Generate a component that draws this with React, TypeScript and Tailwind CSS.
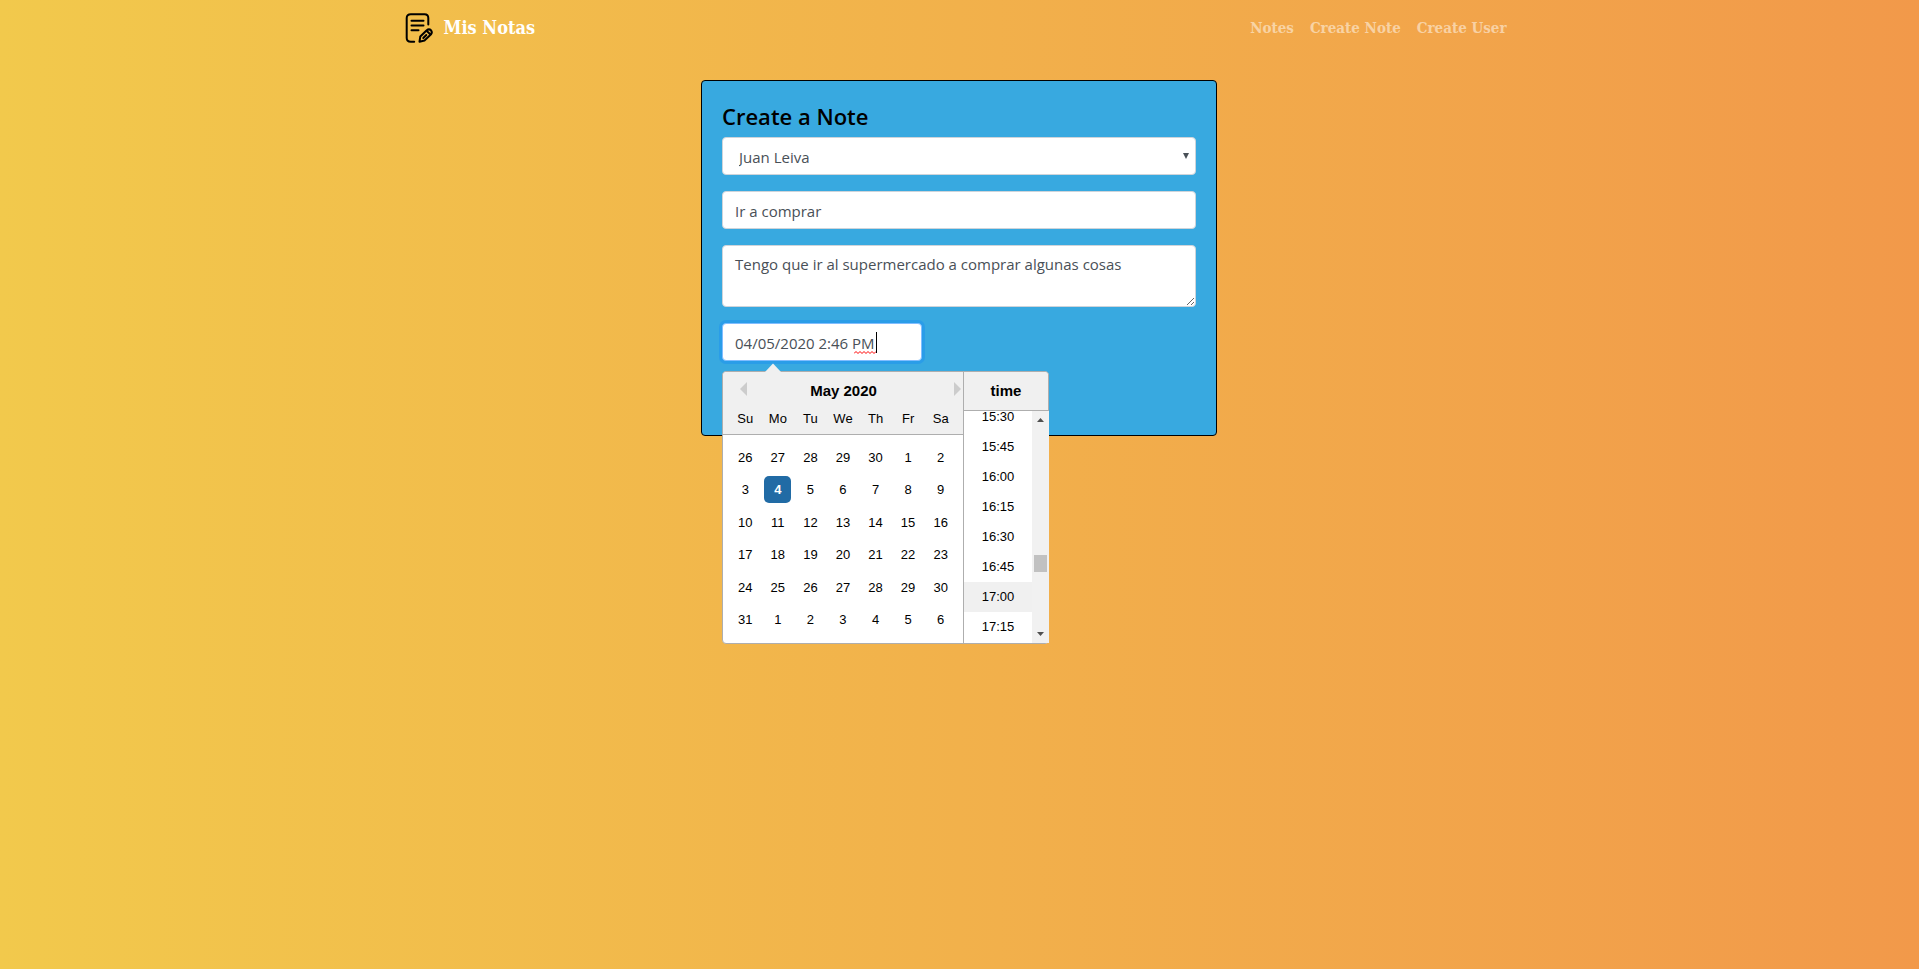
import { useState } from 'react';

const days = ['Su', 'Mo', 'Tu', 'We', 'Th', 'Fr', 'Sa'];
const dates = [
  26, 27, 28, 29, 30, 1, 2,
  3, 4, 5, 6, 7, 8, 9,
  10, 11, 12, 13, 14, 15, 16,
  17, 18, 19, 20, 21, 22, 23,
  24, 25, 26, 27, 28, 29, 30,
  31, 1, 2, 3, 4, 5, 6,
];
const weeks = [0, 1, 2, 3, 4, 5].map((w) => dates.slice(w * 7, w * 7 + 7));
const times = ['15:30', '15:45', '16:00', '16:15', '16:30', '16:45', '17:00', '17:15'];

const field =
  'block w-full rounded border border-[#ced4da] bg-white px-3 text-[15px] leading-6 text-[#495057] outline-none';

function NoteIcon() {
  return (
    <svg
      className="h-[30px] w-[30px]"
      viewBox="0 0 30 30"
      fill="none"
      stroke="black"
      strokeWidth="2"
      strokeLinecap="round"
      strokeLinejoin="round"
      aria-hidden="true"
    >
      <path d="M9.200 28.700H5.800Q1.700 28.700 1.700 25V5Q1.700 1.200 5.800 1.200H19.500Q23.300 1.200 23.300 5V11.500" />
      <path d="M6.500 7.800H18.500M6.500 12.500H18.500M6.500 17.300H13.500" />
      <path d="M14.500 28.700L15.300 23.500L21.500 17.500Q24 15.400 26 17.300Q27.700 19.200 25.800 21.500L19.500 27.500Z" />
      <path d="M21.800 18L25.200 21.200M18.300 25L21.300 22" />
    </svg>
  );
}

function Navbar() {
  return (
    <nav className="mx-auto flex h-14 w-full max-w-[1140px] items-center justify-between px-[15px] font-['DejaVu_Serif_Condensed','DejaVu_Serif',serif] font-bold">
      <a href="#" className="flex items-center gap-[9px] text-[18px] leading-[30px] text-white">
        <NoteIcon />
        <span>Mis Notas</span>
      </a>
      <div className="flex gap-4 pr-2 text-[15px] leading-6 text-white/50">
        <a href="#notes">Notes</a>
        <a href="#create">Create Note</a>
        <a href="#user">Create User</a>
      </div>
    </nav>
  );
}

function Calendar() {
  return (
    <div className="w-[241px] border-r border-[#aeaeae]">
      <div className="h-[63px] rounded-tl border-b border-[#aeaeae] bg-[#f0f0f0]">
        <div className="flex h-[34px] items-center pr-[2px] pl-[17px]">
          <button type="button" aria-label="Previous month">
            <svg className="h-[14px] w-[7px]" viewBox="0 0 7 14" fill="#ccc"><path d="M7 0V14L0 7Z" /></svg>
          </button>
          <div className="flex-1 pt-1 pr-[14px] text-center text-[15px] font-bold text-black">May 2020</div>
          <button type="button" aria-label="Next month">
            <svg className="h-[14px] w-[7px]" viewBox="0 0 7 14" fill="#ccc"><path d="M0 0V14L7 7Z" /></svg>
          </button>
        </div>
        <div className="grid grid-cols-7 px-[6px] text-center leading-[26px]">
          {days.map((d) => (
            <span key={d}>{d}</span>
          ))}
        </div>
      </div>
      <table className="mx-[6px] mt-[6px] mb-[6px] h-[195px] w-[228px] table-fixed border-collapse">
        <tbody>
          {weeks.map((week, w) => (
            <tr key={w}>
              {week.map((d, i) => (
                <td key={i} className="p-0 text-center align-middle">
                  <button
                    type="button"
                    className={
                      w === 1 && i === 1
                        ? 'block mx-auto size-[27px] rounded-[5px] bg-[#216ba5] font-bold text-white'
                        : 'block mx-auto size-[27px] rounded-[5px]'
                    }
                  >
                    {d}
                  </button>
                </td>
              ))}
            </tr>
          ))}
        </tbody>
      </table>
    </div>
  );
}

function TimeList() {
  return (
    <div className="flex w-[84px] flex-col">
      <div className="flex h-[39px] shrink-0 items-center justify-center rounded-tr border-b border-[#aeaeae] bg-[#f0f0f0] text-[15px] font-bold text-black">
        time
      </div>
      <div className="-mr-px flex h-[232px] overflow-hidden">
        <ul className="-mt-[9px] w-[68px] text-center leading-[30px]">
          {times.map((t) => (
            <li key={t} className={t === '17:00' ? 'h-[30px] bg-[#f0f0f0]' : 'h-[30px]'}>
              {t}
            </li>
          ))}
        </ul>
        <div className="flex w-[17px] flex-col items-center bg-[#f1f1f1] py-[7px]">
          <svg className="h-[4px] w-[7px]" viewBox="0 0 7 4" fill="#505050"><path d="M3.500 0L7 4H0Z" /></svg>
          <div className="mt-[133px] h-[17px] w-[13px] bg-[#c1c1c1]" />
          <svg className="mt-auto h-[4px] w-[7px]" viewBox="0 0 7 4" fill="#505050"><path d="M0 0H7L3.500 4Z" /></svg>
        </div>
      </div>
    </div>
  );
}

function DatePicker() {
  return (
    <div className="absolute top-[48px] left-0 rounded border border-[#aeaeae] bg-white font-['Liberation_Sans',Arial,sans-serif] text-[13px] text-black">
      <svg className="absolute -top-[9px] left-[42px] h-[10px] w-[16px]" viewBox="0 0 16 10">
        <path d="M0 9L8 0.500L16 9V10H0Z" fill="#f0f0f0" />
      </svg>
      <div className="flex">
        <Calendar />
        <TimeList />
      </div>
    </div>
  );
}

export default function App() {
  const [title, setTitle] = useState('Ir a comprar');
  const [content, setContent] = useState('Tengo que ir al supermercado a comprar algunas cosas');

  return (
    <div className="min-h-screen bg-linear-to-r/srgb from-[#f2c94c] to-[#f2994a] font-['Open_Sans','Noto_Sans',sans-serif]">
      <Navbar />
      <main className="mx-auto w-full max-w-[517px] pt-6 pr-px">
        <form className="rounded border border-black bg-[#38a9e0] px-5 pt-5 pb-[74px]">
          <h4 className="mb-[6px] text-[22px] leading-[30px] font-semibold text-black">Create a Note</h4>
          <div className="relative mb-4">
            <select aria-label="User" className={`${field} h-[38px] appearance-none pt-[2px] pl-4`}>
              <option>Juan Leiva</option>
            </select>
            <svg className="pointer-events-none absolute top-[16px] right-[7px] h-[6px] w-[6px]" viewBox="0 0 6 6" fill="#495057">
              <path d="M0 0H6L3 6Z" />
            </svg>
          </div>
          <input
            aria-label="Title"
            value={title}
            onChange={(e) => setTitle(e.target.value)}
            className={`${field} mb-4 h-[38px] pt-[2px]`}
          />
          <textarea
            aria-label="Content"
            value={content}
            onChange={(e) => setContent(e.target.value)}
            className={`${field} mb-4 h-[62px] resize-y py-[6px]`}
          />
          <div className="relative w-[200px]">
            <div className="relative flex h-[38px] items-center rounded border border-[#80bdff] bg-white px-3 pt-[2px] shadow-[0_0_0_3px_rgba(0,123,255,0.25)]">
              <input
                aria-label="Date"
                defaultValue="04/05/2020 2:46 PM"
                className="w-full bg-transparent text-[15px] leading-6 text-[#495057] outline-none"
              />
              <svg className="pointer-events-none absolute top-[27px] left-[131px] h-[3px] w-[22px]" viewBox="0 0 22 3" fill="none" stroke="red">
                <path d="M0 2.500L2 0.500L4 2.500L6 0.500L8 2.500L10 0.500L12 2.500L14 0.500L16 2.500L18 0.500L20 2.500L22 0.500" />
              </svg>
              <span className="pointer-events-none absolute top-[8px] left-[153px] h-[21px] w-px bg-black" />
            </div>
            <DatePicker />
          </div>
        </form>
      </main>
    </div>
  );
}
